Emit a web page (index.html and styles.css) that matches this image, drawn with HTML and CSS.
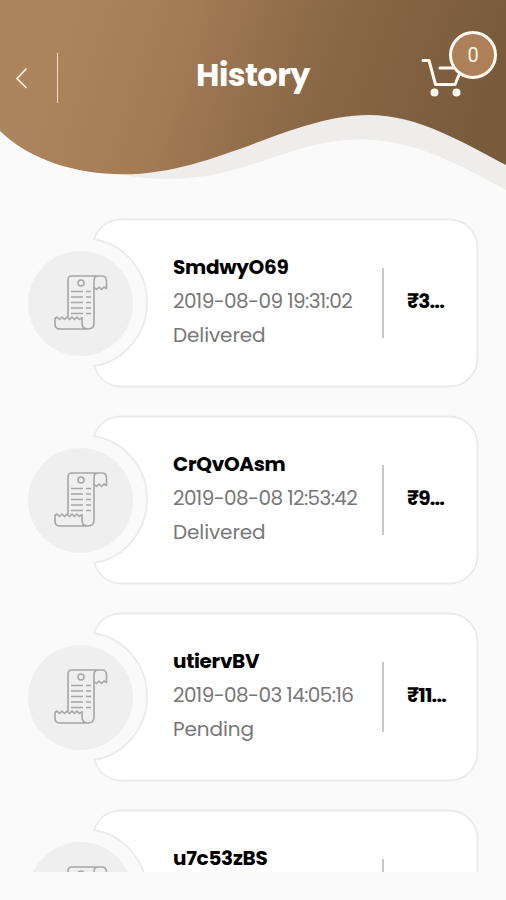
FILE: index.html
```html
<!DOCTYPE html>
<html lang="en">
<head>
  <meta charset="UTF-8">
  <title>History</title>
  <link rel="stylesheet" href="styles.css">
</head>
<body>

  <svg class="defs" width="0" height="0">
    <symbol id="card-shape" viewBox="0 0 450 170">
      <path d="M65.500 21 C71 8 79 1.500 93 1.500 H421 A28 28 0 0 1 449 29 V140 A28 28 0 0 1 421 168.500 H93 C79 168.500 70 160 66 148 A64 64 0 0 0 118.500 84.500 A64 64 0 0 0 65.500 21 Z" fill="#fff" stroke="#ebebeb" stroke-width="1.800"/>
    </symbol>
    <symbol id="receipt" viewBox="0 0 56 58">
      <g fill="none" stroke="#a6a6a6" stroke-width="1.600" stroke-linejoin="round">
        <path d="M15 43 V6 Q15 2 19 2 H49 Q53.500 2 53.500 7 V14.500 L51 13 L48.500 15.500 L46 13 L43.500 15.500 L41 13.500 V7 Q41 2 45 2"/>
        <path d="M41 13 V49 Q41 55 35 55 Q29 55 29 49 V43.500 L26.500 45.500 L24 43 L21.500 45.500 L19 43 L16.500 45.500 L14 43 L11.500 45.500 L9 43 L6.500 45.500 L4 43 L2 44.500 V50 Q2 55 7 55 H35"/>
        <circle cx="28" cy="9" r="3"/>
        <path d="M18 17.500 H30 M33 17.500 H38 M18 23 H30 M33 23 H38 M18 28.500 H30 M33 28.500 H38 M18 34 H30 M33 34 H38 M18 39.500 H30 M33 39.500 H38"/>
      </g>
    </symbol>
  </svg>

  <header>
    <svg class="wave" viewBox="0 0 506 200">
      <defs>
        <linearGradient id="brown" gradientUnits="userSpaceOnUse" x1="60" y1="20" x2="470" y2="150">
          <stop offset="0" stop-color="#ad855c"/>
          <stop offset="0.300" stop-color="#a27a54"/>
          <stop offset="0.600" stop-color="#8b6847"/>
          <stop offset="1" stop-color="#795b3c"/>
        </linearGradient>
      </defs>
      <path d="M110 160 L120 174 C150 181 190 181 230 171 C280 157 315 139 362 139.500 C415 140 460 165 506 190 V100 H250 Z" fill="#efedeb"/>
      <path d="M0 0 H506 V165 C465 144 420 115 368 115 C292 115 215 174 123 174.300 C75 174 30 160 0 131 Z" fill="url(#brown)"/>
    </svg>
    <a class="back">
      <svg width="13" height="23" viewBox="0 0 13 23"><path d="M11.500 1.500 L2 11.500 L11.500 21" fill="none" stroke="#fff0dd" stroke-width="1.700"/></svg>
    </a>
    <h1>History</h1>
    <div class="cart">
      <svg width="42" height="40" viewBox="0 0 42 40">
        <path d="M2 2.500 H8 L14.500 26.500 H34 L40 12 M19 10 H40" fill="none" stroke="#fffaf0" stroke-width="3" stroke-linejoin="round" stroke-linecap="round"/>
        <circle cx="13.500" cy="34.500" r="4" fill="#fffaf0"/>
        <circle cx="35.500" cy="34.500" r="4" fill="#fffaf0"/>
      </svg>
      <span class="badge">0</span>
    </div>
  </header>

  <main>
    <div class="card">
      <svg class="shape"><use href="#card-shape"/></svg>
      <div class="circle"><svg width="56" height="58"><use href="#receipt"/></svg></div>
      <div class="info">
        <h2>SmdwyO69</h2>
        <p class="date">2019-08-09 19:31:02</p>
        <p>Delivered</p>
      </div>
      <div class="price">₹3...</div>
    </div>

    <div class="card">
      <svg class="shape"><use href="#card-shape"/></svg>
      <div class="circle"><svg width="56" height="58"><use href="#receipt"/></svg></div>
      <div class="info">
        <h2>CrQvOAsm</h2>
        <p class="date">2019-08-08 12:53:42</p>
        <p>Delivered</p>
      </div>
      <div class="price">₹9...</div>
    </div>

    <div class="card">
      <svg class="shape"><use href="#card-shape"/></svg>
      <div class="circle"><svg width="56" height="58"><use href="#receipt"/></svg></div>
      <div class="info">
        <h2>utiervBV</h2>
        <p class="date">2019-08-03 14:05:16</p>
        <p>Pending</p>
      </div>
      <div class="price">₹11...</div>
    </div>

    <div class="card">
      <svg class="shape"><use href="#card-shape"/></svg>
      <div class="circle"><svg width="56" height="58"><use href="#receipt"/></svg></div>
      <div class="info">
        <h2>u7c53zBS</h2>
      </div>
      <div class="price"></div>
    </div>
  </main>

</body>
</html>
```
FILE: styles.css
```css
* {
  box-sizing: border-box;
}
body {
  margin: 0;
  height: 900px;
  overflow: hidden;
  background: #fafafa;
  font-family: Poppins, Inter, sans-serif;
}
h1, h2, p {
  margin: 0;
}
.defs {
  position: absolute;
}
header {
  position: relative;
  display: flex;
  align-items: flex-start;
  height: 200px;
  padding-top: 53px;
}
.wave {
  position: absolute;
  top: 0;
  left: 0;
  width: 506px;
  height: 200px;
  z-index: -1;
}
.back {
  display: flex;
  align-items: center;
  width: 58px;
  height: 50px;
  padding-left: 15px;
  border-right: 1.5px solid #f3dfc8;
}
h1 {
  width: 390px;
  margin-right: -27px;
  text-align: center;
  font-size: 32px;
  line-height: 44px;
  letter-spacing: -0.6px;
  color: #fff;
}
.cart {
  position: relative;
  padding-top: 5px;
}
.badge {
  position: absolute;
  left: 28px;
  top: -22px;
  width: 48px;
  height: 48px;
  border: 3px solid #fffaf0;
  border-radius: 50%;
  background: #ad805a;
  color: #fff4e6;
  font-family: Roboto, sans-serif;
  font-size: 20px;
  line-height: 43px;
  text-align: center;
}
main {
  height: 672px;
  padding: 18px 27px 0 28px;
  overflow: hidden;
}
.card {
  position: relative;
  display: flex;
  align-items: center;
  height: 170px;
  margin-bottom: 27px;
}
.shape {
  position: absolute;
  top: 0;
  left: 0;
  width: 451px;
  height: 170px;
  z-index: -1;
}
.circle {
  display: flex;
  align-items: center;
  justify-content: center;
  width: 105px;
  height: 105px;
  margin-right: 40px;
  border-radius: 50%;
  background: #efefef;
}
.info {
  width: 209px;
  height: 106px;
  font-size: 20px;
  line-height: 34px;
  letter-spacing: -0.1px;
  color: #777;
  white-space: nowrap;
}
.date {
  letter-spacing: -0.6px;
}
h2 {
  font-size: 20px;
  line-height: 34px;
  letter-spacing: -0.3px;
  color: #000;
}
.price {
  height: 70px;
  padding-left: 23px;
  border-left: 2px solid #c8c8c8;
  font-size: 20px;
  font-weight: 700;
  line-height: 67px;
  letter-spacing: -0.8px;
  color: #000;
}
```
